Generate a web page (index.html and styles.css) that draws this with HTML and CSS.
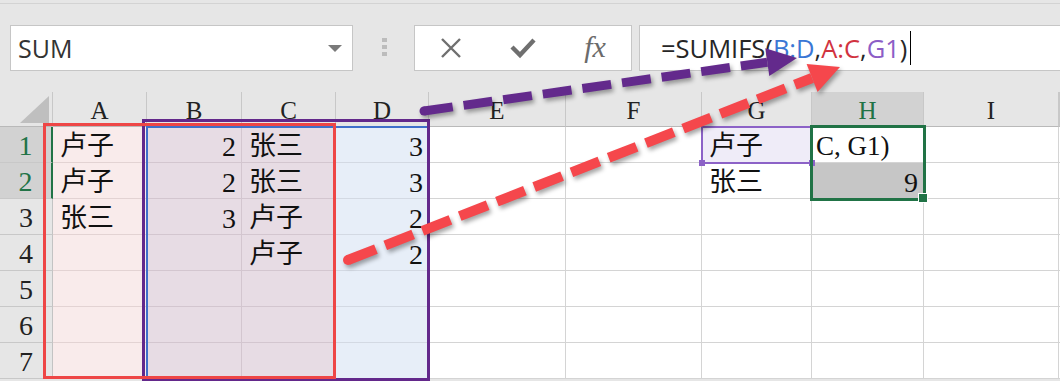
FILE: index.html
```html
<!DOCTYPE html>
<html lang="zh">
<head>
  <meta charset="UTF-8">
  <title>SUMIFS</title>
  <link rel="stylesheet" href="styles.css">
</head>
<body>
  <div class="app">
    <!-- Formula bar -->
    <div class="toolbar">
      <div class="namebox"><span>SUM</span><span class="caret"></span></div>
      <div class="grip"><i></i><i></i><i></i></div>
      <div class="fxbtns">
        <span>
          <svg width="22" height="20" viewBox="0 0 22 20"><path d="M2 1 L20 19 M20 1 L2 19" stroke="#6f6f6f" stroke-width="2.4" fill="none"/></svg>
        </span>
        <span>
          <svg width="28" height="22" viewBox="0 0 28 22"><path d="M3 10 L11 18 L25 3" stroke="#6f6f6f" stroke-width="4.4" fill="none"/></svg>
        </span>
        <span class="fx">fx</span>
      </div>
      <div class="formula">=SUMIFS(<span class="ref-b">B:D</span>,<span class="ref-a">A:C</span>,<span class="ref-g">G1</span>)<span class="cursor"></span></div>
    </div>

    <!-- Sheet -->
    <div class="sheet">
      <div class="row head">
        <div class="corner"><span class="tri"></span></div>
        <div>A</div><div>B</div><div>C</div><div>D</div><div>E</div><div>F</div><div>G</div><div class="on">H</div><div>I</div><div></div>
      </div>
      <div class="row">
        <div class="rh on">1</div>
        <div class="cell col-a">卢子</div><div class="cell col-b num">2</div><div class="cell col-b">张三</div><div class="cell col-d num">3</div>
        <div class="cell"></div><div class="cell"></div><div class="cell g1">卢子</div><div class="cell h1">C, G1)</div><div class="cell"></div><div class="cell"></div>
      </div>
      <div class="row">
        <div class="rh on">2</div>
        <div class="cell col-a">卢子</div><div class="cell col-b num">2</div><div class="cell col-b">张三</div><div class="cell col-d num">3</div>
        <div class="cell"></div><div class="cell"></div><div class="cell">张三</div><div class="cell gray num">9</div><div class="cell"></div><div class="cell"></div>
      </div>
      <div class="row">
        <div class="rh">3</div>
        <div class="cell col-a">张三</div><div class="cell col-b num">3</div><div class="cell col-b">卢子</div><div class="cell col-d num">2</div>
        <div class="cell"></div><div class="cell"></div><div class="cell"></div><div class="cell"></div><div class="cell"></div><div class="cell"></div>
      </div>
      <div class="row">
        <div class="rh">4</div>
        <div class="cell col-a"></div><div class="cell col-b"></div><div class="cell col-b">卢子</div><div class="cell col-d num">2</div>
        <div class="cell"></div><div class="cell"></div><div class="cell"></div><div class="cell"></div><div class="cell"></div><div class="cell"></div>
      </div>
      <div class="row">
        <div class="rh">5</div>
        <div class="cell col-a"></div><div class="cell col-b"></div><div class="cell col-b"></div><div class="cell col-d"></div>
        <div class="cell"></div><div class="cell"></div><div class="cell"></div><div class="cell"></div><div class="cell"></div><div class="cell"></div>
      </div>
      <div class="row">
        <div class="rh">6</div>
        <div class="cell col-a"></div><div class="cell col-b"></div><div class="cell col-b"></div><div class="cell col-d"></div>
        <div class="cell"></div><div class="cell"></div><div class="cell"></div><div class="cell"></div><div class="cell"></div><div class="cell"></div>
      </div>
      <div class="row last">
        <div class="rh">7</div>
        <div class="cell col-a"></div><div class="cell col-b"></div><div class="cell col-b"></div><div class="cell col-d"></div>
        <div class="cell"></div><div class="cell"></div><div class="cell"></div><div class="cell"></div><div class="cell"></div><div class="cell"></div>
      </div>

      <!-- range highlights and annotations -->
      <div class="range-blue"></div>
      <div class="range-g1"><i class="hd hd-l"></i><i class="hd hd-r"></i></div>
      <div class="selection"><i class="fill-handle"></i></div>
      <div class="mark-purple"></div>
      <div class="mark-red"></div>
    </div>

    <svg class="arrows" width="1060" height="381" viewBox="0 0 1060 381">
      <g class="arrow purple">
        <circle cx="424" cy="111" r="4.5"/>
        <line x1="424" y1="111" x2="767.3" y2="62.2" stroke-dasharray="29 11"/>
        <polygon points="797,58 769.3,76.1 765.3,48.3"/>
      </g>
      <g class="arrow red">
        <circle cx="348" cy="260" r="5"/>
        <line x1="348" y1="260" x2="812.1" y2="78" stroke-dasharray="30 10"/>
        <polygon points="840,67 817.6,92 806.6,64"/>
      </g>
    </svg>
  </div>
</body>
</html>
```

FILE: styles.css
```css
body {
  margin: 0;
  width: 1060px;
  height: 381px;
  overflow: hidden;
  background: #e6e6e6;
  font-family: "Open Sans", "Liberation Sans", sans-serif;
}

.app {
  position: relative;
  height: 381px;
  overflow: hidden;
}

/* formula bar */
.toolbar {
  box-sizing: border-box;
  margin-top: 3px;
  height: 89px;
  padding-top: 21px;
  border-top: 1px solid #d3d3d3;
  display: flex;
  align-items: flex-start;
}

.namebox {
  box-sizing: border-box;
  margin-left: 10px;
  width: 343px;
  height: 46px;
  padding: 0 10px 0 7px;
  border: 1px solid #c6c6c6;
  background: #fff;
  display: flex;
  align-items: center;
  justify-content: space-between;
  font-size: 25px;
  color: #333;
}

.caret {
  width: 0;
  height: 0;
  border-left: 7px solid transparent;
  border-right: 7px solid transparent;
  border-top: 7px solid #7a7a7a;
}

.grip {
  margin: 13px 0 0 29px;
  display: flex;
  flex-direction: column;
  gap: 3px;
}

.grip i {
  width: 5px;
  height: 4px;
  background: #bcbcbc;
}

.fxbtns {
  box-sizing: border-box;
  margin-left: 27px;
  width: 218px;
  height: 46px;
  border: 1px solid #c6c6c6;
  background: #fff;
  display: flex;
}

.fxbtns span {
  width: 72px;
  display: flex;
  align-items: center;
  justify-content: center;
}

.fxbtns .fx {
  font-family: "Liberation Serif", serif;
  font-style: italic;
  font-size: 30px;
  color: #6b6b6b;
  padding-bottom: 2px;
}

.formula {
  box-sizing: border-box;
  margin-left: 7px;
  flex: 1;
  height: 46px;
  padding-left: 21px;
  border: 1px solid #c6c6c6;
  border-right: none;
  background: #fff;
  display: flex;
  align-items: center;
  white-space: nowrap;
  font-size: 25.5px;
  color: #262626;
}

.ref-b { color: #3a77d5; }
.ref-a { color: #d1333f; }
.ref-g { color: #8c5dc6; }

.cursor {
  width: 1px;
  height: 34px;
  margin-left: 3px;
  background: #000;
}

/* sheet grid */
.sheet {
  position: relative;
  font-family: "Liberation Serif", "Noto Sans CJK SC", serif;
}

.row {
  display: grid;
  grid-template-columns: 53px 94px 95px 94px 93px 137px 136px 110px 112px 135px 1fr;
  height: 36px;
}

.row > div {
  box-sizing: border-box;
  display: flex;
  align-items: center;
  line-height: 1;
}

.head {
  height: 35px;
}

.head > div {
  justify-content: center;
  align-items: flex-end;
  padding-bottom: 3px;
  border-right: 1px solid #c8c8c8;
  border-bottom: 1px solid #b9b9b9;
  font-size: 25px;
  color: #222;
}

.head > .on {
  background: #d2d2d2;
  color: #217346;
}

.corner {
  position: relative;
}

.tri {
  position: absolute;
  right: 3px;
  bottom: 3px;
  width: 29px;
  height: 27px;
  background: #bfbfbf;
  clip-path: polygon(100% 0, 100% 100%, 0 100%);
}

.rh {
  justify-content: center;
  padding-top: 3px;
  border-right: 1px solid #c3c3c3;
  border-bottom: 1px solid #c8c8c8;
  font-size: 28px;
  color: #222;
}

.rh.on {
  background: #d2d2d2;
  color: #217346;
  border-right: 2px solid #217346;
}

.cell {
  background: #fff;
  padding: 3px 5px 0 7px;
  border-right: 1px solid #d4d4d4;
  border-bottom: 1px solid #d4d4d4;
  font-size: 27px;
  color: #111;
}

.cell.num {
  justify-content: flex-end;
  font-size: 28px;
  padding-top: 4px;
}

.cell.h1 { padding-left: 4px; }

.col-a { background: #f9ebeb; border-color: #e3d3d3; }
.col-b { background: #e7dce4; border-color: #d3c6cf; }
.col-d { background: #e7eef8; border-color: #d3d9e3; }
.g1 { background: #efecf8; }
.gray { background: #c6c6c6; }

/* excel range highlights */
.range-blue {
  position: absolute;
  left: 146px;
  top: 34px;
  width: 283px;
  height: 255px;
  box-sizing: border-box;
  border: 2px solid #3f6fca;
  border-bottom: none;
}

.range-g1 {
  position: absolute;
  left: 701px;
  top: 34px;
  width: 112px;
  height: 38px;
  box-sizing: border-box;
  border: 2px solid #8c62c7;
}

.hd {
  position: absolute;
  bottom: -4px;
  width: 6px;
  height: 6px;
  background: #8c62c7;
}

.hd-l { left: -4px; }
.hd-r { right: -4px; }

.selection {
  position: absolute;
  left: 810px;
  top: 33px;
  width: 116px;
  height: 76px;
  box-sizing: border-box;
  border: 3px solid #217346;
}

.fill-handle {
  position: absolute;
  right: -5px;
  bottom: -5px;
  width: 8px;
  height: 8px;
  background: #217346;
  border: 1px solid #fff;
}

/* hand drawn annotations */
.mark-purple {
  position: absolute;
  left: 142px;
  top: 27px;
  width: 288px;
  height: 262px;
  box-sizing: border-box;
  border: 3px solid #63288b;
}

.mark-red {
  position: absolute;
  left: 43px;
  top: 31px;
  width: 293px;
  height: 256px;
  box-sizing: border-box;
  border: 3px solid #ee4646;
}

.arrows {
  position: absolute;
  left: 0;
  top: 0;
  pointer-events: none;
}

.arrow {
  filter: drop-shadow(2px 3px 2px rgba(0, 0, 0, 0.35));
}

.purple line { stroke: #632a8c; stroke-width: 9; }
.purple circle, .purple polygon { fill: #632a8c; }

.red line { stroke: #f5474c; stroke-width: 10; }
.red circle, .red polygon { fill: #f5474c; }
```
